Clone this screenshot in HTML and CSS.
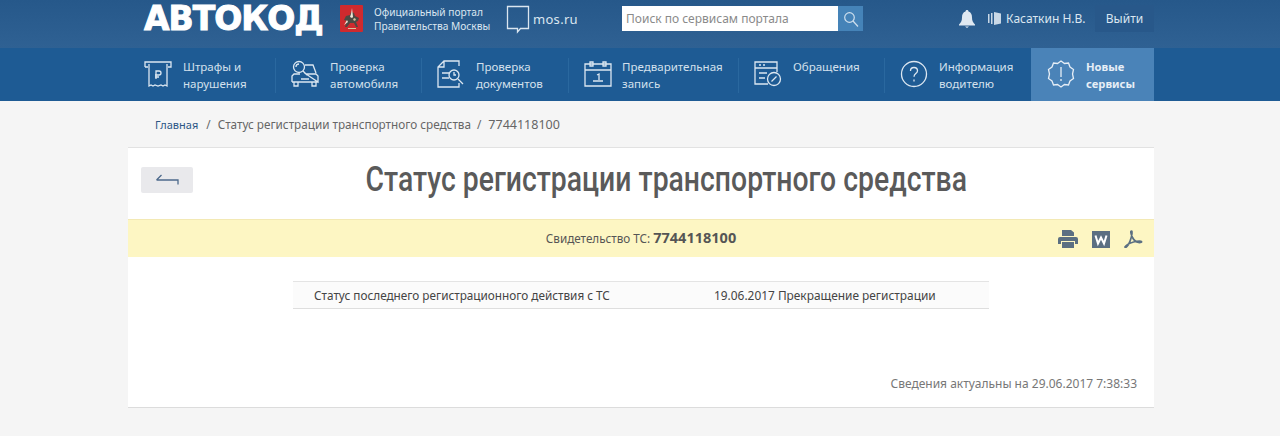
FILE: index.html
```html
<!DOCTYPE html>
<html lang="ru">
<head>
    <meta charset="UTF-8">
    <meta name="viewport" content="width=device-width, initial-scale=1.0">
    <title>Статус регистрации транспортного средства</title>
    <link rel="stylesheet" href="styles.css">
</head>
<body>
    <header class="topbar">
        <div class="wrap topbar-row">
            <a class="logo">АВТОКОД</a>
            <svg class="crest" width="23" height="27" viewBox="0 0 23 27">
                <rect width="23" height="27" rx="1" fill="#cf2a2e"/>
                <path d="M5 22l2-6-3-1 2-4 4-1 1-3 3 1 1 3 4 2-1 3-2 1 2 5h-2l-2-4h-4l-3 4z" fill="#4a4a44"/>
                <path d="M12 3l1 9-1 1-2-1 1-3zM7 15l-3 5 4-3z" fill="#efe6d6"/>
                <path d="M14 13l2 1-1 2-2-1zM8 23h8v1H8z" fill="#d8c49a"/>
            </svg>
            <div class="portal">Официальный портал<br>Правительства Москвы</div>
            <svg class="bubble" width="24" height="30" viewBox="0 0 24 30" fill="none" stroke="#dbe6f0" stroke-width="1.3">
                <path d="M1.500 1.500h21v22h-8l-3 3.500v-3.500h-10z"/>
            </svg>
            <div class="mos">mos.ru</div>
            <form class="search">
                <div class="search-input">Поиск по сервисам портала</div>
                <div class="search-btn">
                    <svg width="16" height="16" viewBox="0 0 16 16" fill="none" stroke="#cfe0ee" stroke-width="1.2">
                        <circle cx="6.500" cy="6.500" r="4.800"/>
                        <path d="M10 10l5 5.500"/>
                    </svg>
                </div>
            </form>
            <svg class="bell" width="16" height="18" viewBox="0 0 16 18">
                <path d="M8 0c1 0 1.500.700 1.500 1.600 2.500.700 3.500 3 3.500 5.900 0 3.500 1 5 3 7v1H0v-1c2-2 3-3.500 3-7 0-2.900 1-5.200 3.500-5.900C6.500.700 7 0 8 0z" fill="#dfe8f1"/>
                <path d="M6 16.500h4L8 18z" fill="#dfe8f1"/>
            </svg>
            <svg class="user-icon" width="13" height="13" viewBox="0 0 13 13">
                <path d="M0 2h1.500v9H0zM3 1h1.500v11H3zM6 0l7 1.500v10L6 13z" fill="#c9d8e6"/>
            </svg>
            <div class="user">Касаткин Н.В.</div>
            <div class="logout">Выйти</div>
        </div>
    </header>

    <nav class="mainnav">
        <div class="wrap nav-row">
            <a class="nav-item item-fines">
                <svg width="28" height="28" viewBox="0 0 28 28" fill="none" stroke="#dce7f1" stroke-width="1.3">
                    <path d="M1 7V2h26v5h-3M4 7H1M5 4v22l2-1 2 1 2-1 3 1 3-1 2 1 2-1 2 1V4"/>
                    <path d="M12 19v-8h3a2 2 0 0 1 0 4h-4M11 17h4"/>
                </svg>
                <span>Штрафы и<br>нарушения</span>
            </a>
            <a class="nav-item item-car">
                <svg width="28" height="28" viewBox="0 0 28 28" fill="none" stroke="#dce7f1" stroke-width="1.3">
                    <circle cx="8" cy="7" r="5.500"/>
                    <path d="M8 4a3 3 0 0 0-3 3M12 11l4 4M14 5h8l3 8M1 22v-6l2-2h6M15 14h10l2 2v6zM1 22h26M3 22v4h4v-4M21 22v4h4v-4M10 19h8"/>
                </svg>
                <span>Проверка<br>автомобиля</span>
            </a>
            <a class="nav-item item-docs">
                <svg width="28" height="28" viewBox="0 0 28 28" fill="none" stroke="#dce7f1" stroke-width="1.3">
                    <path d="M22 6V1H7L1 7v20h21v-4M7 1v6H1M5 13h7M5 18h7"/>
                    <circle cx="17" cy="15" r="5"/>
                    <path d="M17 12v3h2M21 19l5 5"/>
                </svg>
                <span>Проверка<br>документов</span>
            </a>
            <a class="nav-item item-record">
                <svg width="28" height="28" viewBox="0 0 28 28" fill="none" stroke="#dce7f1" stroke-width="1.3">
                    <path d="M1 4h26v22H1zM1 10h26M6 2h3v4H6zM19 2h3v4h-3zM9 21h10M13 15l2-1v6"/>
                </svg>
                <span>Предварительная<br>запись</span>
            </a>
            <a class="nav-item item-mail">
                <svg width="28" height="28" viewBox="0 0 28 28" fill="none" stroke="#dce7f1" stroke-width="1.3">
                    <path d="M14 24H1V2h22v10M1 8h22M5 5h2M9 5h2M5 13h8M5 18h6"/>
                    <circle cx="20" cy="19" r="6.500"/>
                    <path d="M17.500 21.500L22.500 16.500"/>
                </svg>
                <span>Обращения</span>
            </a>
            <a class="nav-item item-info">
                <svg width="28" height="28" viewBox="0 0 28 28" fill="none" stroke="#dce7f1" stroke-width="1.3">
                    <circle cx="14" cy="14" r="12.500"/>
                    <path d="M10.500 11c0-2 1.500-3.500 3.500-3.500s3.500 1.300 3.500 3.200c0 2.800-3.500 3-3.500 6"/>
                    <path d="M14 19.500v2"/>
                </svg>
                <span>Информация<br>водителю</span>
            </a>
            <a class="nav-item nav-new">
                <svg width="28" height="28" viewBox="0 0 28 28" fill="none" stroke="#e6eef6" stroke-width="1.3">
                    <path d="M14 1l3.500 2.500 4-.5 1.500 4 3.500 2.500L25.500 14l1 4.500L23 21l-1.500 4-4-.5L14 27l-3.500-2.500-4 .5L5 21l-3.500-2.500 1-4.500-1-4.500L5 7l1.500-4 4 .5z"/>
                    <path d="M14 7v10M14 19v2"/>
                </svg>
                <span>Новые<br>сервисы</span>
            </a>
        </div>
    </nav>

    <main class="wrap">
        <div class="crumbs">
            <a class="crumb-home">Главная</a>
            <span class="crumb-sep">/</span>
            <span>Статус регистрации транспортного средства</span>
            <span class="crumb-sep">/</span>
            <span class="crumb-num">7744118100</span>
        </div>

        <section class="card">
            <div class="card-head">
                <a class="back">
                    <svg width="24" height="12" viewBox="0 0 24 12" fill="none" stroke="#4d6a8c" stroke-width="1.3">
                        <path d="M1.500 6H23v4.500M1.500 6l5-5"/>
                    </svg>
                </a>
                <h1><span>Статус регистрации транспортного средства</span></h1>
            </div>

            <div class="doc-bar">
                <div class="doc-title">Свидетельство ТС: <b>7744118100</b></div>
                <div class="doc-tools">
                    <svg width="20" height="18" viewBox="0 0 20 18" fill="#5b6f82">
                        <path d="M4 0h9l3 2.500V6H4zM2 7h16a2 2 0 0 1 2 2v5h-3v-3H3v3H0V9a2 2 0 0 1 2-2zM4 12h12v6H4z"/>
                    </svg>
                    <svg class="tool-word" width="18" height="17" viewBox="0 0 18 17">
                        <rect width="18" height="17" fill="#5b6f82"/>
                        <path d="M3.500 4.500l2.500 8 3-6 3 6 2.500-8" fill="none" stroke="#fff" stroke-width="2"/>
                    </svg>
                    <svg class="tool-pdf" width="19" height="18" viewBox="0 0 19 18" fill="none" stroke="#5b6f82" stroke-width="1.700">
                        <path d="M7.500 1c-1 0-1 2 1 6.500 1.500 3 3 4.500 6 5 2.500.300 3.500-.500 3-1-.600-.700-4-.500-8 .500-4 1.200-7.500 3-8.500 5 0 .800 1 .500 2-.500 2-2 4.500-8 5-13 0-2 0-2.500-.500-2.500z"/>
                    </svg>
                </div>
            </div>

            <div class="status-table">
                <div class="status-name">Статус последнего регистрационного действия с ТС</div>
                <div class="status-value">19.06.2017 Прекращение регистрации</div>
            </div>

            <div class="updated">Сведения актуальны на 29.06.2017 7:38:33</div>
        </section>
    </main>
</body>
</html>
```

FILE: styles.css
```css
html, body {
    height: 100%;
}

body {
    margin: 0;
    background-color: #f5f5f5;
    font-family: "Noto Sans", "Open Sans", sans-serif;
    font-size: 13px;
    color: #555;
    overflow: hidden;
}

a {
    color: inherit;
    text-decoration: none;
}

.wrap {
    width: 1026px;
    margin-left: 128px;
}

/* top bar */
.topbar {
    height: 48px;
    background: linear-gradient(#26588a, #2f6193);
}

.topbar-row {
    display: flex;
    align-items: center;
    box-sizing: border-box;
    height: 48px;
    padding-bottom: 11px;
    color: #dbe6f0;
}

.logo {
    flex: none;
    width: 196px;
    margin-left: 16px;
    font-family: "DejaVu Sans", sans-serif;
    font-weight: bold;
    font-size: 33px;
    line-height: 36px;
    letter-spacing: -1px;
    white-space: nowrap;
    color: #fff;
    -webkit-text-stroke: 1px #fff;
}

.portal {
    margin-left: 11px;
    width: 132px;
    font-size: 10.200px;
    line-height: 14px;
    white-space: nowrap;
}

.bubble {
    margin-top: 2px;
}

.mos {
    margin-left: 3px;
    font-size: 13px;
    letter-spacing: 0.3px;
    width: 46px;
}

.search {
    display: flex;
    margin-left: 43px;
    height: 25px;
}

.search-input {
    width: 216px;
    padding-left: 4px;
    box-sizing: border-box;
    background: #fff;
    color: #8a8a8a;
    font-size: 12px;
    line-height: 25px;
}

.search-btn {
    display: flex;
    align-items: center;
    justify-content: center;
    width: 25px;
    background: #4583b8;
}

.bell {
    margin-left: 96px;
}

.user-icon {
    margin-left: 13px;
}

.user {
    margin-left: 5px;
    font-size: 12px;
    width: 78px;
    white-space: nowrap;
}

.logout {
    margin-left: 11px;
    width: 59px;
    height: 27px;
    background: #28588a;
    text-align: center;
    font-size: 12px;
    line-height: 27px;
}

/* main menu */
.mainnav {
    height: 53px;
    background: #1e5b94;
}

.nav-row {
    display: flex;
    height: 53px;
}

.nav-item {
    display: flex;
    box-sizing: border-box;
    padding: 10px 0 0 16px;
    gap: 11px;
    color: #d3e0ec;
    font-size: 11.550px;
    line-height: 17px;
    position: relative;
    white-space: nowrap;
}

.nav-item svg {
    flex: none;
    margin-top: 2px;
}

.nav-item + .nav-item::before {
    content: "";
    position: absolute;
    left: 0;
    top: 10px;
    bottom: 8px;
    width: 1px;
    background: #2a689f;
}

.item-fines { width: 147px; }
.item-car { width: 146px; }
.item-docs { width: 147px; }
.item-record { width: 170px; gap: 10px; }
.item-mail { width: 146px; }
.item-info { width: 147px; }

.nav-new {
    width: 123px;
    background: #4a83b8;
    font-weight: bold;
    font-size: 11.200px;
    color: #e6eef6;
}

.nav-new::before {
    display: none;
}

/* breadcrumbs */
.crumbs {
    display: flex;
    gap: 6px;
    height: 46px;
    padding-left: 27px;
    font-size: 11.720px;
    line-height: 47px;
    color: #666;
}

.crumb-home {
    color: #2c5585;
    font-size: 11px;
    margin-right: 2px;
}

.crumb-sep {
    margin-right: 1px;
}

.crumb-num {
    font-size: 12.500px;
}

/* card */
.card {
    height: 261px;
    box-sizing: border-box;
    background: #fff;
    border-top: 1px solid #e2e2e2;
    border-bottom: 1px solid #dcdcdc;
}

.card-head {
    display: flex;
    height: 71px;
    padding-left: 13px;
    border-bottom: 1px solid #f3e9b4;
}

.back {
    display: flex;
    align-items: center;
    justify-content: center;
    width: 52px;
    height: 26px;
    margin-top: 19px;
    background: #e9e9ec;
    border-radius: 2px;
}

h1 {
    flex: 1;
    margin: 12px 14px 0 0;
    text-align: center;
    font-family: Roboto, sans-serif;
    font-weight: 500;
    font-size: 35px;
    line-height: 40px;
    color: #5a5a5a;
}

h1 span {
    display: inline-block;
    white-space: nowrap;
    transform: scaleX(0.81);
}

.doc-bar {
    position: relative;
    height: 37px;
    background: #fdf6c3;
    text-align: center;
    font-size: 11.700px;
    line-height: 35px;
    color: #555;
}

.doc-title b {
    font-size: 14.500px;
}

.doc-tools {
    position: absolute;
    right: 11px;
    top: 10px;
    display: flex;
    gap: 14px;
    line-height: 0;
}

.tool-word {
    margin-top: 1px;
}

.status-table {
    display: flex;
    box-sizing: border-box;
    width: 696px;
    height: 28px;
    margin: 24px 0 0 165px;
    border-top: 1px solid #e4e4e4;
    border-bottom: 1px solid #dedede;
    background: #fbfbfb;
    font-size: 11.750px;
    line-height: 27px;
    color: #444;
}

.status-name {
    width: 400px;
    margin-left: 21px;
}

.status-value {
    font-size: 11.900px;
}

.updated {
    margin-top: 66px;
    padding-right: 17px;
    text-align: right;
    font-size: 12px;
    color: #777;
}
```
